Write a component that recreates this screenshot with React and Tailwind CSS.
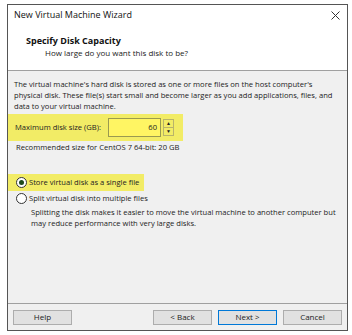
import React from 'react';

const font = { fontFamily: '"Open Sans", "Noto Sans", sans-serif' };

function Radio({ checked }) {
  return (
    <span className="w-[11px] h-[11px] rounded-full border border-[#333] bg-white flex items-center justify-center shrink-0">
      {checked && <span className="w-[5px] h-[5px] rounded-full bg-[#1c4a1c]" />}
    </span>
  );
}

function Btn({ children, primary }) {
  return (
    <button
      className={
        'h-[15px] w-[59px] bg-[#e1e1e1] text-[8px] leading-none text-[#222] border ' +
        (primary ? 'border-[#0078d7]' : 'border-[#adadad]')
      }
    >
      {children}
    </button>
  );
}

export default function App() {
  return (
    <div className="w-[352px] h-[335px] bg-white pt-[4px] pl-[7px] overflow-hidden" style={font}>
      <div className="w-[341px] h-[327px] border border-[#555] flex flex-col">

        {/* header */}
        <div className="bg-white h-[66px] border-b border-[#a0a0a0] relative">
          <div className="pl-[6px] pt-[4px] text-[9px] text-[#111] leading-[12px]">New Virtual Machine Wizard</div>
          <svg className="absolute right-[7px] top-[6px]" width="9" height="9" viewBox="0 0 9 9">
            <path d="M0.5 0.5L8.5 8.5M8.5 0.5L0.5 8.5" stroke="#333" strokeWidth="1" fill="none" />
          </svg>
          <div className="pl-[18px] pt-[14px] text-[9px] font-bold text-[#111] leading-[12px]">Specify Disk Capacity</div>
          <div className="pl-[37px] text-[8px] text-[#222] leading-[12px]">How large do you want this disk to be?</div>
        </div>

        {/* body */}
        <div className="flex-1 bg-[#f0f0f0] flex flex-col text-[7.6px] text-[#222] leading-[11px]">
          <div className="pl-[6px] pt-[8px] pr-[10px]">
            The virtual machine's hard disk is stored as one or more files on the host computer's physical disk. These file(s) start small and become larger as you add applications, files, and data to your virtual machine.
          </div>

          <div className="w-[175px] h-[27px] bg-[#f2ec66] flex items-center pl-[7px] mt-[2px]">
            <span>Maximum disk size (GB):</span>
            <div className="ml-[7px] w-[53px] h-[19px] bg-[#fff563] border border-[#9a9a50] flex items-center justify-end pr-[3px]">60</div>
            <div className="ml-[2px] w-[11px] h-[17px] flex flex-col border border-[#b9b46a]">
              <div className="flex-1 flex items-center justify-center text-[5px] leading-none border-b border-[#b9b46a]">▲</div>
              <div className="flex-1 flex items-center justify-center text-[5px] leading-none">▼</div>
            </div>
          </div>

          <div className="pl-[8px] mt-[1px]">Recommended size for CentOS 7 64-bit: 20 GB</div>

          <div className="w-[136px] h-[17px] bg-[#f2ec66] flex items-center pl-[8px] mt-[21px] gap-[2px]">
            <Radio checked />
            <span>Store virtual disk as a single file</span>
          </div>
          <div className="flex items-center pl-[8px] h-[15px] gap-[2px]">
            <Radio />
            <span>Split virtual disk into multiple files</span>
          </div>
          <div className="pl-[23px] pr-[10px] mt-[1px]">
            Splitting the disk makes it easier to move the virtual machine to another computer but may reduce performance with very large disks.
          </div>

          <div className="flex-1" />

          {/* footer */}
          <div className="border-t border-[#a0a0a0] h-[27px] flex items-center px-[5px]">
            <Btn>Help</Btn>
            <div className="flex-1" />
            <div className="flex gap-[6px]">
              <Btn>&lt; Back</Btn>
              <Btn primary>Next &gt;</Btn>
              <Btn>Cancel</Btn>
            </div>
          </div>
        </div>
      </div>
    </div>
  );
}
